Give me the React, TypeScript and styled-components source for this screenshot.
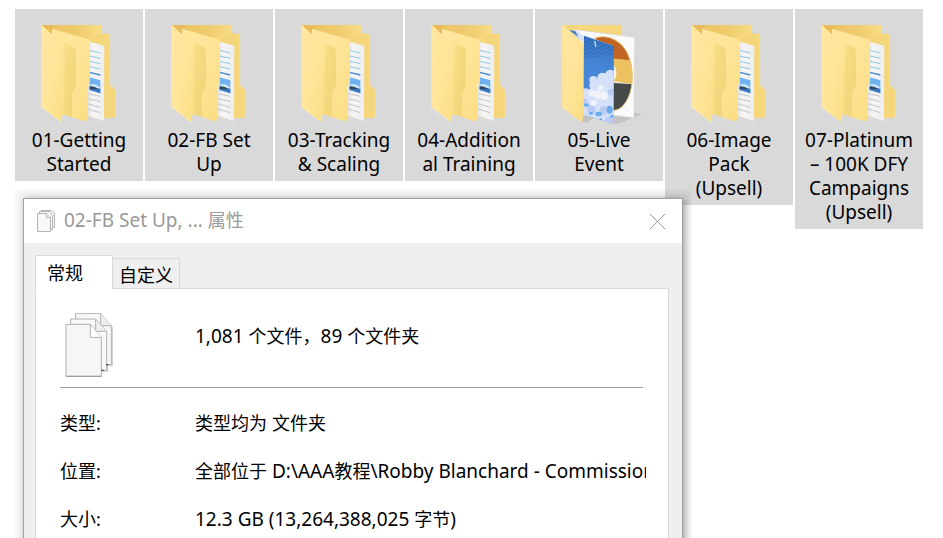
import React from "react";
import styled, { createGlobalStyle } from "styled-components";

const GlobalStyle = createGlobalStyle`
  * { box-sizing: border-box; }
  body {
    margin: 0;
    background: #fff;
    color: #000;
    font-family: "Noto Sans", "Noto Sans CJK SC", sans-serif;
    font-size: 18px;
  }
`;

const Desktop = styled.main`
  position: relative;
  height: 100vh;
  overflow: hidden;
`;

const Files = styled.ul`
  display: flex;
  align-items: flex-start;
  gap: 2px;
  margin: 0;
  padding: 9px 15px;
  list-style: none;
`;

const File = styled.li`
  display: flex;
  flex: 0 0 128px;
  flex-direction: column;
  align-items: center;
  padding: 6px 0 5px;
  background: #d9d9d9;
`;

const FolderArt = styled.svg`
  width: 98px;
  height: 113px;
`;

const Caption = styled.span`
  font-size: 19px;
  line-height: 24px;
  text-align: center;
  white-space: pre;
`;

const LatinText = styled.span`
  font-size: 19px;
`;

const Dialog = styled.section`
  position: absolute;
  top: 198px;
  left: 23px;
  right: 260px;
  border: 1px solid #a0a0a0;
  background: #efefef;
  box-shadow:
    2px 1px 7px rgba(0, 0, 0, 0.34),
    0 0 3px 8px rgba(0, 0, 0, 0.04);
`;

const TitleBar = styled.header`
  display: flex;
  align-items: center;
  gap: 8px;
  height: 44px;
  padding: 0 16px 0 12px;
  background: #fff;
  color: #999;
`;

const Title = styled.h1`
  flex: 1;
  margin: 0;
  padding-bottom: 2px;
  font-size: 18px;
  font-weight: 400;
  line-height: 24px;
`;

const SmallPages = styled.svg`
  width: 20px;
  height: 24px;
`;

const Close = styled.button`
  display: flex;
  padding: 0;
  border: 0;
  background: none;
  color: #999;
`;

const Body = styled.div`
  padding: 12px 13px 12px 11px;
`;

const TabList = styled.div`
  display: flex;
  align-items: flex-end;
`;

const Tab = styled.button<{ $active?: boolean }>`
  position: relative;
  z-index: ${(p) => (p.$active ? 1 : 0)};
  width: ${(p) => (p.$active ? 78 : 67)}px;
  height: ${(p) => (p.$active ? 34 : 31)}px;
  margin-bottom: -1px;
  padding: ${(p) => (p.$active ? "2px 0 0 11px" : "2px 0 0 6px")};
  border: 1px solid #d9d9d9;
  border-left-width: ${(p) => (p.$active ? 1 : 0)}px;
  border-bottom-color: ${(p) => (p.$active ? "#fff" : "#d9d9d9")};
  background: ${(p) => (p.$active ? "#fff" : "#efefef")};
  color: #000;
  font: inherit;
  line-height: 24px;
  text-align: left;
  white-space: nowrap;
`;

const Panel = styled.div`
  padding: 24px 25px 24px 24px;
  border: 1px solid #d9d9d9;
  background: #fff;
`;

const Summary = styled.div`
  display: grid;
  grid-template-columns: 135px 1fr;
  align-items: start;
  height: 75px;
  border-bottom: 1px solid #a0a0a0;
`;

const LargePages = styled.svg`
  width: 60px;
  height: 70px;
`;

const Count = styled.span`
  padding-top: 11px;
  line-height: 24px;
`;

const Details = styled.dl`
  display: grid;
  grid-template-columns: 135px 1fr;
  row-gap: 24px;
  margin: 23px -3px 0 0;
  line-height: 24px;

  dt, dd {
    height: 24px;
    margin: 0;
    overflow: hidden;
    white-space: nowrap;
  }
`;

const Drawings = styled.svg`
  position: absolute;
  width: 0;
  height: 0;
`;

const SharedDefs = () => (
  <Drawings aria-hidden="true">
    <defs>
      <linearGradient id="flap" x1="0" y1="0" x2="1" y2="1">
        <stop offset="0" stopColor="#ffe79e" />
        <stop offset="0.5" stopColor="#ffe59a" />
        <stop offset="1" stopColor="#fadd82" />
      </linearGradient>
      <linearGradient id="inner" x1="0" x2="1">
        <stop offset="0" stopColor="#eac062" />
        <stop offset="0.6" stopColor="#efcb6d" />
        <stop offset="1" stopColor="#f8dc86" />
      </linearGradient>
      <linearGradient id="fold" x1="0" y1="0" x2="1" y2="1">
        <stop offset="0" stopColor="#ffe59a" />
        <stop offset="0.4" stopColor="#f6da80" />
        <stop offset="1" stopColor="#f2d479" />
      </linearGradient>
      <linearGradient id="paper" x1="0" x2="1">
        <stop offset="0" stopColor="#dcdcdc" />
        <stop offset="0.4" stopColor="#f6f6f6" />
        <stop offset="1" stopColor="#ededed" />
      </linearGradient>
      <linearGradient id="sky" x1="0" y1="0" x2="0" y2="1">
        <stop offset="0" stopColor="#326fbd" />
        <stop offset="0.35" stopColor="#4584d4" />
        <stop offset="1" stopColor="#4b92dd" />
      </linearGradient>
      <pattern id="stars" width="12" height="12" patternUnits="userSpaceOnUse">
        <path d="M1 2h3v3H1zM7 8h3v3H7z" fill="#174e96" />
      </pattern>
      <clipPath id="cover">
        <path d="M102 62 192 93 190 326 96 297Z" />
      </clipPath>
      <clipPath id="disc">
        <path d="M132 72C153 58 193 65 218 93C250 130 255 202 235 247C222 276 205 286 190 286V93Z" />
      </clipPath>
    </defs>
  </Drawings>
);

const DocumentFolder = () => (
  <FolderArt viewBox="0 0 294 339" aria-hidden="true">
    <path d="M35 30H213V56H232Q240 57 240 66V211L255 225V303Q255 308 249 308H190L80 280Z" fill="#f4d57a" />
    <path d="M35 30H213V86L180 76 66 43 75 63Z" fill="url(#inner)" />
    <path d="M213 56H232Q240 57 240 66V211L255 225V303Q255 308 249 308H224V90L170 70Z" fill="#f5d67a" />
    <path d="M239 62V212L254 226V306" fill="none" stroke="#fbe08f" strokeWidth="2" />
    <path d="M179 80 223 92 222 318 166 300Z" fill="url(#paper)" />
    <path d="M179 106 211 114M179 123 211 130M179 139 211 146M179 155 211 162" stroke="#8ccbe8" strokeWidth="3" />
    <path d="M179 172 211 180" stroke="#458bd1" strokeWidth="4" />
    <path d="M179 187 211 196V235L179 225Z" fill="#70b2ef" />
    <path d="M179 209Q196 202 211 218V235L179 225Z" fill="#c8e5f5" />
    <path d="M179 215 211 221V235L179 225Z" fill="#3978c8" />
    <path d="M179 214Q192 212 206 223L179 222Z" fill="#32495c" />
    <path d="M174 236 211 244M174 251 211 260M172 266 211 277M170 281 211 293" stroke="#c7c7c7" strokeWidth="3" />
    <path d="M36 30 66 52 66 41 180 74V198L172 214V307L168 320 98 297 80 120Z" fill="url(#flap)" />
    <path d="M88 76 126 94Q138 99 138 109V211L126 237V306L96 296Z" fill="url(#fold)" />
    <path d="M35 30 68 59 99 83Q103 87 103 95V290L96 303V323L35 277Z" fill="url(#flap)" />
    <path d="M36 31V276L94 321" fill="none" stroke="#ffedb5" strokeWidth="2" />
    <path d="M36 30 66 58 66 42 80 34Z" fill="#e8ba58" />
  </FolderArt>
);

const MediaFolder = () => (
  <FolderArt viewBox="0 0 294 339" aria-hidden="true">
    <path d="M96 301 135 307 109 324 96 321ZM192 304 254 308 250 292 275 299 253 307 210 325 190 326Z" fill="#c3c3c3" />
    <path d="M35 30H213V86L60 60Z" fill="#f5d67b" />
    <path d="M77 44 254 67 252 308 185 300Z" fill="#fafafa" stroke="#d6d6d6" strokeWidth="2" />
    <g clipPath="url(#disc)">
      <path d="M120 50H255V148L185 133Z" fill="#c16622" />
      <path d="M185 130 255 137V209L185 198Z" fill="#edc060" />
      <path d="M185 203 255 208V290H185Z" fill="#454947" />
    </g>
    <path d="M132 72C153 58 193 65 218 93C250 130 255 202 235 247C222 276 205 286 190 286" fill="none" stroke="#e0c378" strokeWidth="3" />
    <path d="M190 148Q207 171 193 198" fill="#f5f5ef" />
    <path d="M56 44 81 47 101 62 101 80Z" fill="#d7e1fb" />
    <path d="M55 44 76 49 86 66Z" fill="#487fbd" />
    <g clipPath="url(#cover)">
      <path d="M90 50H194V330H90Z" fill="url(#sky)" />
      <path d="M102 62H192V122L150 126 102 130Z" fill="url(#stars)" />
      <g fill="#d5e0fb">
        <circle cx="108" cy="236" r="16" />
        <circle cx="130" cy="195" r="12" />
        <circle cx="138" cy="212" r="20" />
        <circle cx="157" cy="188" r="15" />
        <circle cx="181" cy="180" r="16" />
        <circle cx="172" cy="204" r="28" />
        <circle cx="152" cy="238" r="36" />
        <circle cx="112" cy="262" r="24" />
        <circle cx="178" cy="256" r="30" />
        <circle cx="138" cy="285" r="30" />
        <circle cx="177" cy="304" r="24" />
        <circle cx="108" cy="296" r="15" />
      </g>
      <g fill="#b9caf3">
        <circle cx="183" cy="232" r="10" />
        <circle cx="124" cy="283" r="13" />
        <circle cx="162" cy="286" r="13" />
        <circle cx="179" cy="316" r="13" />
        <circle cx="104" cy="259" r="9" />
      </g>
      <g fill="#f0f2f8">
        <circle cx="143" cy="239" r="13" />
        <circle cx="161" cy="242" r="13" />
        <circle cx="125" cy="234" r="10" />
        <circle cx="152" cy="218" r="8" />
        <circle cx="130" cy="263" r="9" />
      </g>
      <g fill="#69aced">
        <ellipse cx="146" cy="297" rx="10" ry="7" />
        <ellipse cx="109" cy="270" rx="8" ry="5" />
        <ellipse cx="179" cy="284" rx="9" ry="12" />
        <ellipse cx="123" cy="295" rx="7" ry="4" />
        <circle cx="186" cy="304" r="5" />
      </g>
      <path d="M134 78 138 96" stroke="#b9d9f7" strokeWidth="4" />
    </g>
    <path d="M35 30 56 44 76 66 101 83V294L96 323 35 277Z" fill="url(#flap)" />
    <path d="M36 31V276L95 321" fill="none" stroke="#f7dda0" strokeWidth="2" />
  </FolderArt>
);

const PageStack = () => (
  <g strokeWidth="3">
    <path d="M187 80V197H169M173 97V214H157" fill="none" stroke="#c9c9c9" />
    <path d="M77 40H151L184 77V194H77Z" fill="#f7f7f7" stroke="#b0b0b0" />
    <path d="M152 41V77H184" fill="#eee" stroke="#b0b0b0" />
    <path d="M62 57H137L170 94V211H62Z" fill="#f9f9f9" stroke="#b0b0b0" />
    <path d="M137 59V94H169" fill="#eee" stroke="#b0b0b0" />
    <path d="M48 73H121L154 112V229H48Z" fill="#f6f6f6" stroke="#b0b0b0" />
    <path d="M121 75V112H154" fill="#fff" stroke="#b0b0b0" />
    <path d="M49 229H155" stroke="#a0a0a0" strokeWidth="4" />
    <path d="M155 211H160M169 194H174" stroke="#222" strokeWidth="4" />
  </g>
);

const files = [
  { name: "01-Getting\nStarted" },
  { name: "02-FB Set\nUp" },
  { name: "03-Tracking\n& Scaling" },
  { name: "04-Addition\nal Training" },
  { name: "05-Live\nEvent", media: true },
  { name: "06-Image\nPack\n(Upsell)" },
  { name: "07-Platinum\n– 100K DFY\nCampaigns\n(Upsell)" },
];

const details = [
  ["类型:", "类型均为 文件夹"],
  ["位置:", "全部位于 D:\\AAA教程\\Robby Blanchard - Commission"],
  ["大小:", "12.3 GB (13,264,388,025 字节)"],
];

// Latin runs are set one pixel larger than the Chinese text around them.
const MixedText = ({ children }: { children: string }) => (
  <>
    {children
      .split(/([\x20-\x7e]+)/)
      .filter(Boolean)
      .map((run, i) => (/^[\x20-\x7e]/.test(run) ? <LatinText key={i}>{run}</LatinText> : run))}
  </>
);

export default function App() {
  return (
    <Desktop>
      <GlobalStyle />
      <SharedDefs />
      <Files>
        {files.map((file) => (
          <File key={file.name}>
            {file.media ? <MediaFolder /> : <DocumentFolder />}
            <Caption>{file.name}</Caption>
          </File>
        ))}
      </Files>
      <Dialog role="dialog" aria-labelledby="dialog-title">
        <TitleBar>
          <SmallPages viewBox="0 0 20 24" aria-hidden="true" fill="#f8f8f8" stroke="#b4b4b4">
            <path d="M5.5 1.5H15.5L18.5 4.5V18.5H5.5Z" />
            <path d="M3.5 2.5H13.500L16.5 6.5V20.5H3.5Z" />
            <path d="M1.5 4.5H10.5L14.5 8.500V22.5H1.5Z" />
            <path d="M10.5 4.5V8.5H14.5" />
          </SmallPages>
          <Title id="dialog-title">
            <MixedText>02-FB Set Up, ... 属性</MixedText>
          </Title>
          <Close type="button" aria-label="关闭">
            <svg width="17" height="17" viewBox="0 0 17 17" fill="none" stroke="currentColor">
              <path d="M1 1 16 16M16 1 1 16" />
            </svg>
          </Close>
        </TitleBar>
        <Body>
          <TabList role="tablist">
            <Tab type="button" role="tab" aria-selected="true" aria-controls="general" id="general-tab" $active>
              常规
            </Tab>
            <Tab type="button" role="tab" aria-selected="false">
              自定义
            </Tab>
          </TabList>
          <Panel role="tabpanel" id="general" aria-labelledby="general-tab">
            <Summary>
              <LargePages viewBox="30 39 180 210" aria-hidden="true">
                <PageStack />
              </LargePages>
              <Count>
                <MixedText>1,081 个文件，89 个文件夹</MixedText>
              </Count>
            </Summary>
            <Details>
              {details.map(([label, value]) => (
                <React.Fragment key={label}>
                  <dt>{label}</dt>
                  <dd>
                    <MixedText>{value}</MixedText>
                  </dd>
                </React.Fragment>
              ))}
            </Details>
          </Panel>
        </Body>
      </Dialog>
    </Desktop>
  );
}
